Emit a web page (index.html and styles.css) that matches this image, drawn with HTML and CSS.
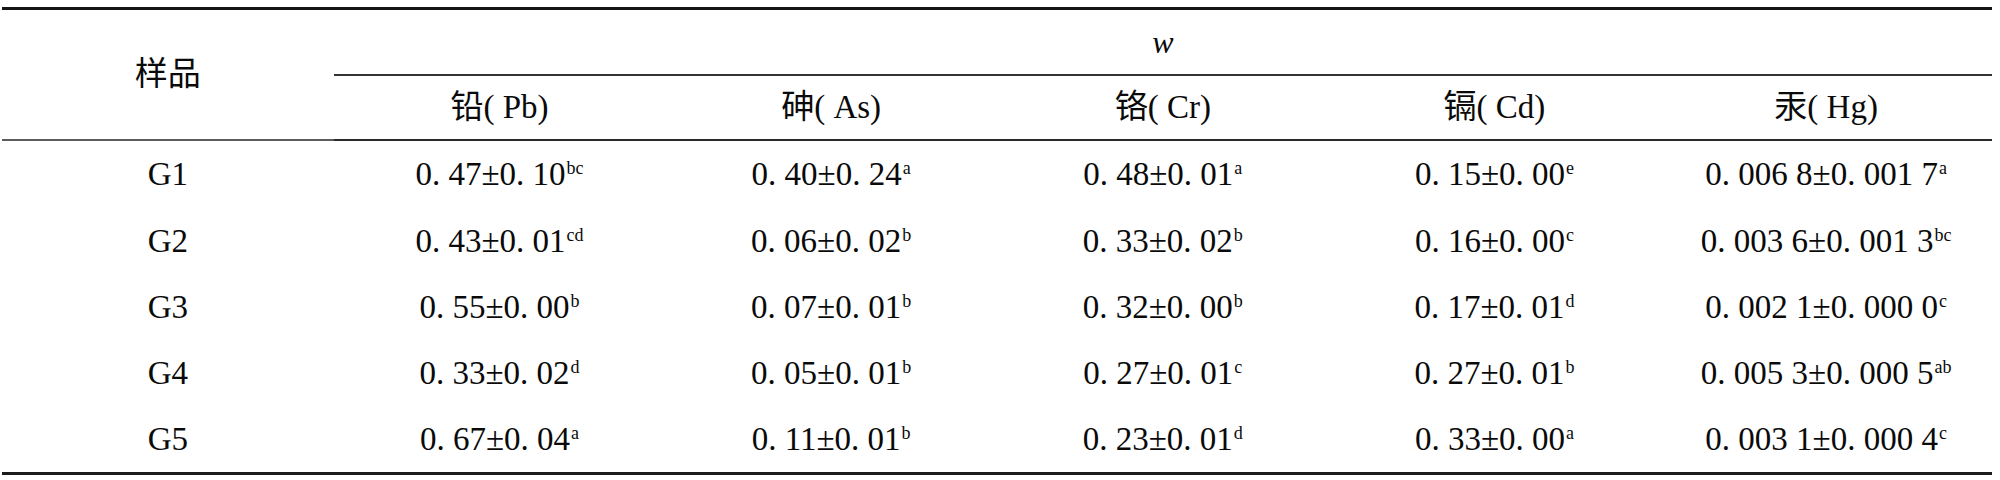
FILE: index.html
```html
<!DOCTYPE html>
<html lang="zh-CN">
<head>
<meta charset="utf-8">
<title>重金属含量</title>
<link rel="stylesheet" href="styles.css">
</head>
<body>
<table class="tbl">
  <colgroup>
    <col class="c"><col class="c"><col class="c"><col class="c"><col class="c"><col class="c">
  </colgroup>
  <thead>
    <tr class="h1">
      <th class="sample" rowspan="2">样品</th>
      <th class="wcell" colspan="5"><i>w</i></th>
    </tr>
    <tr class="h2">
      <th>铅( Pb)</th>
      <th>砷( As)</th>
      <th>铬( Cr)</th>
      <th>镉( Cd)</th>
      <th>汞( Hg)</th>
    </tr>
  </thead>
  <tbody>
    <tr>
      <td>G1</td>
      <td>0. 47±0. 10<sup>bc</sup></td>
      <td>0. 40±0. 24<sup>a</sup></td>
      <td>0. 48±0. 01<sup>a</sup></td>
      <td>0. 15±0. 00<sup>e</sup></td>
      <td>0. 006 8±0. 001 7<sup>a</sup></td>
    </tr>
    <tr>
      <td>G2</td>
      <td>0. 43±0. 01<sup>cd</sup></td>
      <td>0. 06±0. 02<sup>b</sup></td>
      <td>0. 33±0. 02<sup>b</sup></td>
      <td>0. 16±0. 00<sup>c</sup></td>
      <td>0. 003 6±0. 001 3<sup>bc</sup></td>
    </tr>
    <tr>
      <td>G3</td>
      <td>0. 55±0. 00<sup>b</sup></td>
      <td>0. 07±0. 01<sup>b</sup></td>
      <td>0. 32±0. 00<sup>b</sup></td>
      <td>0. 17±0. 01<sup>d</sup></td>
      <td>0. 002 1±0. 000 0<sup>c</sup></td>
    </tr>
    <tr>
      <td>G4</td>
      <td>0. 33±0. 02<sup>d</sup></td>
      <td>0. 05±0. 01<sup>b</sup></td>
      <td>0. 27±0. 01<sup>c</sup></td>
      <td>0. 27±0. 01<sup>b</sup></td>
      <td>0. 005 3±0. 000 5<sup>ab</sup></td>
    </tr>
    <tr>
      <td>G5</td>
      <td>0. 67±0. 04<sup>a</sup></td>
      <td>0. 11±0. 01<sup>b</sup></td>
      <td>0. 23±0. 01<sup>d</sup></td>
      <td>0. 33±0. 00<sup>a</sup></td>
      <td>0. 003 1±0. 000 4<sup>c</sup></td>
    </tr>
  </tbody>
</table>
</body>
</html>
```
FILE: styles.css
```css
html, body {
  margin: 0;
  padding: 0;
  background: #ffffff;
}

body {
  padding: 7px 0 0 2px;
  font-family: "Liberation Serif", "Noto Sans CJK SC", serif;
  color: #0a0a0a;
}

.tbl {
  width: 1990px;
  border-collapse: collapse;
  table-layout: fixed;
  font-size: 33px;
  border-top: 3px solid #151515;
  border-bottom: 3px solid #1c1c1c;
}

.tbl .c {
  width: 331.66px;
}

.tbl th,
.tbl td {
  padding: 0;
  text-align: center;
  vertical-align: middle;
  font-weight: normal;
  white-space: nowrap;
  line-height: 1;
}

.h1 th {
  height: 64px;
}

.wcell {
  border-bottom: 2px solid #333333;
}

.wcell i {
  font-style: italic;
  font-size: 32px;
}

.h2 th {
  height: 63px;
  border-bottom: 2px solid #2a2a2a;
}

.sample {
  border-bottom: 2px solid #5c5c5c;
}

.tbl tbody td {
  height: 66px;
}

.tbl tbody tr:first-child td {
  height: 67px;
}

.tbl sup {
  font-size: 18px;
  line-height: 0;
  vertical-align: 11px;
  margin-left: 1px;
}
```
